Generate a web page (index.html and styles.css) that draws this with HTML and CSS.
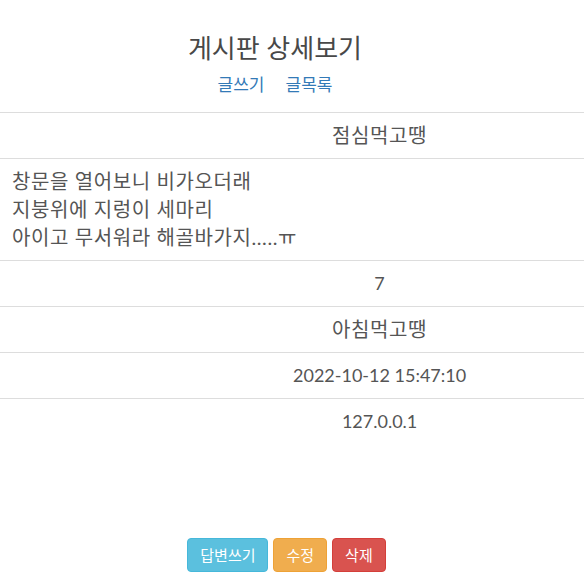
FILE: index.html
```html
<!DOCTYPE html>
<html lang="ko">
<head>
<meta charset="utf-8">
<title>게시판 상세보기</title>
<link rel="stylesheet" href="styles.css">
</head>
<body>
<header class="head">
  <h2 class="title">게시판 상세보기</h2>
  <nav class="links"><a href="#">글쓰기</a><a href="#">글목록</a></nav>
</header>
<table class="detail">
  <tr><td class="label"></td><td class="val ko">점심먹고땡</td></tr>
  <tr><td class="content ko" colspan="2">창문을 열어보니 비가오더래<br>지붕위에 지렁이 세마리<br>아이고 무서워라 해골바가지.....ㅠ</td></tr>
  <tr><td class="label"></td><td class="val">7</td></tr>
  <tr><td class="label"></td><td class="val ko">아침먹고땡</td></tr>
  <tr><td class="label"></td><td class="val">2022-10-12 15:47:10</td></tr>
  <tr class="last"><td class="label"></td><td class="val">127.0.0.1</td></tr>
</table>
<div class="actions">
  <button class="btn btn-info" type="button">답변쓰기</button>
  <button class="btn btn-warning" type="button">수정</button>
  <button class="btn btn-danger" type="button">삭제</button>
</div>
</body>
</html>
```
FILE: styles.css
```css
html, body {
  margin: 0;
  padding: 0;
  background: #fff;
}
body {
  font-family: Lato, "Noto Sans CJK KR", sans-serif;
  color: #555;
  width: 584px;
}
.head {
  padding: 31px 34px 0 0;
  text-align: center;
}
.title {
  margin: 0;
  font-size: 26px;
  font-weight: 400;
  line-height: 34px;
  color: #484848;
}
.links {
  margin-top: 8px;
  display: flex;
  justify-content: center;
  gap: 21px;
  font-size: 17px;
  line-height: 24px;
}
.links a {
  color: #337ab7;
  text-decoration: none;
}
.detail {
  margin-top: 15px;
  width: 100%;
  border-collapse: collapse;
  font-size: 18px;
}
.detail td {
  border-top: 1px solid #ddd;
  padding: 8px 8px 9px;
  line-height: 28px;
}
.detail .ko {
  font-size: 20px;
  letter-spacing: 0.6px;
}
.detail .label {
  width: 30%;
}
.detail .val {
  text-align: center;
}
.detail .content {
  text-align: left;
  padding-left: 12px;
}
.actions {
  margin-top: 94px;
  padding-right: 11px;
  display: flex;
  justify-content: center;
  gap: 5px;
}
.btn {
  font-family: "Noto Sans CJK KR", sans-serif;
  font-size: 15px;
  line-height: 20px;
  padding: 6px 12px;
  border: 1px solid transparent;
  border-radius: 4px;
  color: #fff;
}
.btn-info {
  background: #5bc0de;
  border-color: #46b8da;
}
.btn-warning {
  background: #f0ad4e;
  border-color: #eea236;
}
.btn-danger {
  background: #d9534f;
  border-color: #d43f3a;
}
```
